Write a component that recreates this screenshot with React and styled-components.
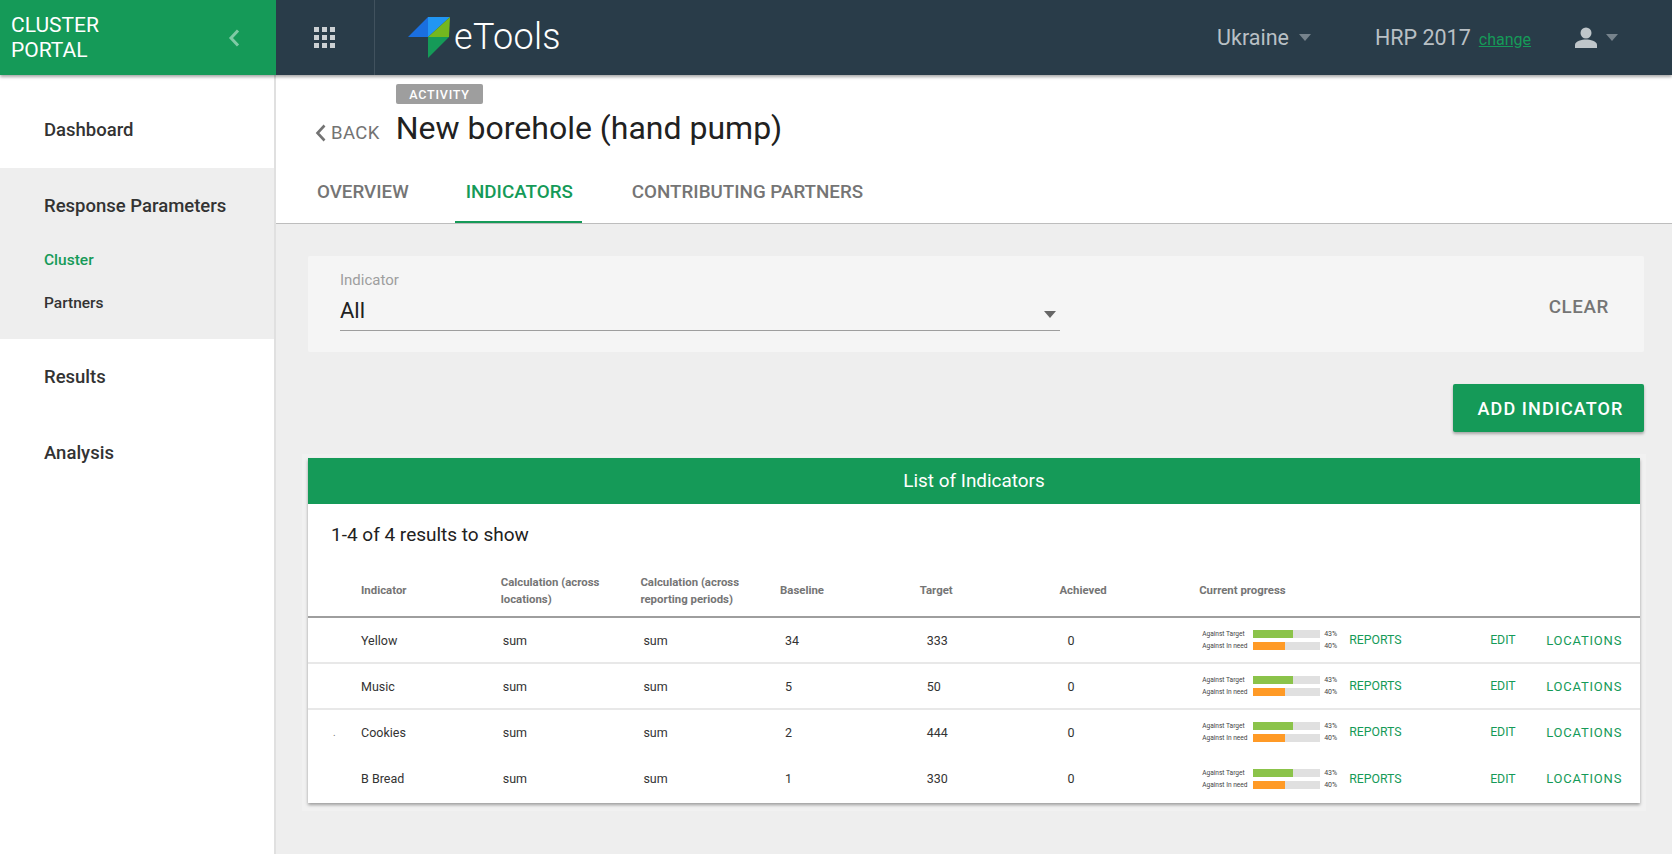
import React from "react";
import styled, { createGlobalStyle } from "styled-components";

const Global = createGlobalStyle`
  html, body { margin: 0; padding: 0; height: 100%; overflow: hidden; }
  body { font-family: Roboto, "Liberation Sans", sans-serif; background: #eeeeee; color: #212121; }
  * { box-sizing: border-box; }
`;

const Page = styled.div`width: 1672px; height: 854px; display: flex; flex-direction: column; overflow: hidden;`;
const TopBar = styled.header`height: 75px; flex: none; display: flex; background: #293c49; box-shadow: 0 2px 3px rgba(0,0,0,.35); position: relative; z-index: 2;`;
const Brand = styled.div`width: 276px; flex: none; background: #159a58; display: flex; align-items: center; justify-content: space-between; padding: 0 36px 0 11px; color: #fff; font-size: 21px; line-height: 25px; font-weight: 400;`;
const Chevron = styled.svg`display: block;`;
const AppsCell = styled.div`width: 99px; flex: none; border-right: 1px solid #41525e; display: flex; align-items: center; justify-content: center;`;
const AppsGrid = styled.div`display: grid; grid-template-columns: repeat(3, 5px); gap: 3px 3px; transform: translateX(-1px);`;
const AppsDot = styled.i`width: 5px; height: 5px; background: #ccd1d4; display: block;`;
const LogoCell = styled.div`display: flex; align-items: center; margin-left: 33px; gap: 0;`;
const LogoText = styled.span`color: #fff; font-size: 36px; font-weight: 300; margin-left: 4px; position: relative; top: -1px; letter-spacing: .3px;`;
const TopRight = styled.div`margin-left: auto; display: flex; align-items: center; padding-right: 54px; color: #b9c0c5; font-size: 21.5px;`;
const Caret = styled.i`display: inline-block; width: 0; height: 0; border-left: 6.5px solid transparent; border-right: 6.5px solid transparent; border-top: 7px solid ${p => p.$color || "#76838c"}; margin-left: ${p => p.$ml || 10}px; margin-top: ${p => p.$mt || 0}px;`;
const Country = styled.span`display: flex; align-items: center; margin-right: 64px;`;
const Plan = styled.span`margin-right: 8px;`;
const Change = styled.a`color: #159a58; font-size: 16px; text-decoration: underline; margin-right: 44px; position: relative; top: 2px;`;
const UserWrap = styled.span`display: flex; align-items: center;`;

const Body = styled.div`flex: 1; display: flex; min-height: 0;`;
const Sidebar = styled.nav`width: 276px; flex: none; background: #fff; border-right: 2px solid #e0e0e0; padding-top: 17px;`;
const NavItem = styled.div`height: 76px; display: flex; align-items: center; padding: 0 0 0 44px; font-size: 18.5px; font-weight: 500; color: #333;`;
const NavGroup = styled.div`background: #eeeeee; height: 171px;`;
const GroupTitle = styled(NavItem)`height: 70px; padding: 6px 0 0 44px;`;
const SubItem = styled.div`padding-left: 44px; font-size: 15.5px; font-weight: 500; height: 43px; display: flex; align-items: center; color: ${p => p.$active ? "#159a58" : "#333"};`;

const Main = styled.main`flex: 1; min-width: 0; display: flex; flex-direction: column;`;
const TitleArea = styled.div`background: #fff; height: 149px; border-bottom: 1px solid #bdbdbd; display: flex; flex-direction: column;`;
const TitleRow = styled.div`display: flex; align-items: flex-end; height: 73px; padding-left: 39px;`;
const Back = styled.div`display: flex; align-items: center; gap: 5px; color: #737373; font-size: 18.5px; font-weight: 400; margin-right: 16px; padding-bottom: 3px; letter-spacing: .4px;`;
const TitleBlock = styled.div`display: flex; flex-direction: column; align-items: flex-start;`;
const Badge = styled.span`background: #9e9e9e; color: #fff; font-size: 12.5px; letter-spacing: .8px; font-weight: 500; border-radius: 2px; height: 20px; padding: 0 13.5px; display: flex; align-items: center; margin-bottom: 5px;`;
const Title = styled.h1`margin: 0; font-size: 32px; font-weight: 400; line-height: 38px; color: #212121;`;
const Tabs = styled.div`display: flex; margin-top: 19px; padding-left: 41px; height: 57px;`;
const Tab = styled.div`height: 57px; margin-right: ${p => p.$gap || 0}px; padding: 15px ${p => p.$active ? "9px" : "0"} 0 ${p => p.$active ? "11px" : "0"}; font-size: 18.8px; font-weight: 500; white-space: nowrap; color: ${p => p.$active ? "#159a58" : "#757575"}; border-bottom: ${p => p.$active ? "2px solid #159a58" : "none"};`;

const Content = styled.div`flex: 1; padding: 32px 28px 0 32px; min-height: 0;`;
const Filter = styled.section`background: #f5f5f5; height: 96px; border-radius: 2px; display: flex; justify-content: space-between; padding: 14px 35px 0 32px;`;
const Field = styled.div`width: 720px;`;
const FieldLabel = styled.div`font-size: 15px; color: #9e9e9e; line-height: 20px;`;
const FieldValue = styled.div`height: 41px; border-bottom: 1px solid #9e9e9e; display: flex; align-items: center; justify-content: space-between; font-size: 22px; color: #212121; padding-right: 4px; padding-top: 1px;`;
const Clear = styled.div`font-size: 18.8px; font-weight: 500; letter-spacing: .6px; color: #757575; padding-top: 26px;`;
const ActionRow = styled.div`display: flex; justify-content: flex-end; margin-top: 32px;`;
const AddButton = styled.button`width: 191px; height: 48px; border: 0; padding: 0 0 0 4px; background: #159a58; color: #fff; font: 500 18px Roboto, sans-serif; letter-spacing: 1.1px; border-radius: 2px; box-shadow: 0 2px 3px rgba(0,0,0,.3);`;
const Card = styled.section`margin-top: 26px; width: 1332px; background: #fff; box-shadow: 0 2px 3px rgba(0,0,0,.35), 0 2px 0 6px #f1f1f1;`;
const CardHead = styled.div`height: 46px; background: #159a58; color: #fff; display: flex; align-items: center; justify-content: center; font-size: 18.9px; font-weight: 400; padding-bottom: 2px;`;
const Count = styled.div`height: 60px; padding-left: 23px; display: flex; align-items: center; font-size: 19px; color: #212121;`;
const HeadRow = styled.div`display: grid; grid-template-columns: 53px repeat(6, 139.7px) 1fr; align-items: center; height: 54px; padding-top: 1px; border-bottom: 2px solid #9e9e9e; font-size: 11.4px; font-weight: 700; color: #757575; line-height: 17px;`;
const Row = styled.div`display: grid; grid-template-columns: 53px repeat(6, 139.7px) 1fr; align-items: center; height: ${p => p.$tall ? 47 : 46}px; border-bottom: 2px solid ${p => p.$line ? "#e8e8e8" : "transparent"}; font-size: 12.5px; color: #333;`;
const Dot = styled.span`font-size: 10px; color: #777; padding-left: 25px;`;
const Cell = styled.span`padding-left: ${p => p.$pad || 0}px;`;
const ProgressCell = styled.div`display: flex; align-items: center; padding-left: 3px;`;
const Bars = styled.div`width: 147px; flex: none; display: flex; flex-direction: column; gap: 4px;`;
const BarLine = styled.div`display: flex; align-items: center; height: 8px;`;
const BarLabel = styled.span`width: 51px; font-size: 6.6px; color: #444; white-space: nowrap; flex: none;`;
const Track = styled.div`width: 67px; height: 8px; background: #e0e0e0; flex: none;`;
const Fill = styled.div`height: 100%; background: ${p => p.$color};`;
const Pct = styled.span`font-size: 7px; color: #444; margin-left: 4px;`;
const Actions = styled.div`display: grid; grid-template-columns: 141px 56px auto; align-items: center;`;
const RowLink = styled.span`color: #159a58; font-size: ${p => p.$size || 12.3}px; letter-spacing: ${p => p.$ls || 0}px;`;

const Logo = () => (
  <svg width="42" height="41" viewBox="0 0 42 41">
    <polygon points="0,20 20,0 20,20" fill="#1a6fe0" />
    <polygon points="20,0 42,0 20,20" fill="#2196f3" />
    <polygon points="42,0 41,20 20,20" fill="#74b71f" />
    <polygon points="20,20 41,20 20,41" fill="#159a58" />
  </svg>
);

const rows = [
  ["Yellow", "34", "333"],
  ["Music", "5", "50"],
  ["Cookies", "2", "444"],
  ["B Bread", "1", "330"],
];

export default function App() {
  return (
    <Page>
      <Global />
      <TopBar>
        <Brand>
          <div>CLUSTER<br />PORTAL</div>
          <Chevron width="12" height="18" viewBox="0 0 12 18"><path d="M10 1.5 3 9l7 7.5" fill="none" stroke="#7fcaa5" strokeWidth="3" /></Chevron>
        </Brand>
        <AppsCell><AppsGrid>{Array.from({ length: 9 }).map((_, i) => <AppsDot key={i} />)}</AppsGrid></AppsCell>
        <LogoCell><Logo /><LogoText>eTools</LogoText></LogoCell>
        <TopRight>
          <Country>Ukraine<Caret /></Country>
          <Plan>HRP 2017</Plan>
          <Change>change</Change>
          <UserWrap>
            <svg width="22" height="22" viewBox="0 0 22 22" fill="#bfc6ca"><circle cx="11" cy="6" r="5.5" /><path d="M0 21v-3c0-4 7-5.5 11-5.5S22 14 22 18v3z" /></svg>
            <Caret $ml={9} />
          </UserWrap>
        </TopRight>
      </TopBar>
      <Body>
        <Sidebar>
          <NavItem>Dashboard</NavItem>
          <NavGroup>
            <GroupTitle>Response Parameters</GroupTitle>
            <SubItem $active>Cluster</SubItem>
            <SubItem>Partners</SubItem>
          </NavGroup>
          <NavItem>Results</NavItem>
          <NavItem>Analysis</NavItem>
        </Sidebar>
        <Main>
          <TitleArea>
            <TitleRow>
              <Back>
                <svg width="11" height="18" viewBox="0 0 11 18"><path d="M9.5 1.5 2.5 9l7 7.5" fill="none" stroke="#737373" strokeWidth="2.6" /></svg>
                BACK
              </Back>
              <TitleBlock>
                <Badge>ACTIVITY</Badge>
                <Title>New borehole (hand pump)</Title>
              </TitleBlock>
            </TitleRow>
            <Tabs>
              <Tab $gap={46}>OVERVIEW</Tab>
              <Tab $gap={50} $active>INDICATORS</Tab>
              <Tab>CONTRIBUTING PARTNERS</Tab>
            </Tabs>
          </TitleArea>
          <Content>
            <Filter>
              <Field>
                <FieldLabel>Indicator</FieldLabel>
                <FieldValue>All<Caret $color="#666" $mt={8} /></FieldValue>
              </Field>
              <Clear>CLEAR</Clear>
            </Filter>
            <ActionRow><AddButton>ADD INDICATOR</AddButton></ActionRow>
            <Card>
              <CardHead>List of Indicators</CardHead>
              <Count>1-4 of 4 results to show</Count>
              <HeadRow>
                <span />
                <span>Indicator</span>
                <span>Calculation (across<br />locations)</span>
                <span>Calculation (across<br />reporting periods)</span>
                <span>Baseline</span>
                <span>Target</span>
                <span>Achieved</span>
                <span>Current progress</span>
              </HeadRow>
              {rows.map(([name, base, target], i) => (
                <Row key={name} $line={i < 2} $tall={i === 3}>
                  <Dot>{i === 2 ? "." : ""}</Dot>
                  <Cell>{name}</Cell>
                  <Cell $pad={2}>sum</Cell>
                  <Cell $pad={3}>sum</Cell>
                  <Cell $pad={5}>{base}</Cell>
                  <Cell $pad={7}>{target}</Cell>
                  <Cell $pad={8}>0</Cell>
                  <ProgressCell>
                    <Bars>
                      <BarLine><BarLabel>Against Target</BarLabel><Track><Fill $color="#8bc34a" style={{ width: "60%" }} /></Track><Pct>43%</Pct></BarLine>
                      <BarLine><BarLabel>Against In need</BarLabel><Track><Fill $color="#ff9a26" style={{ width: "47%" }} /></Track><Pct>40%</Pct></BarLine>
                    </Bars>
                    <Actions>
                      <RowLink>REPORTS</RowLink>
                      <RowLink>EDIT</RowLink>
                      <RowLink $size={13} $ls={0.8}>LOCATIONS</RowLink>
                    </Actions>
                  </ProgressCell>
                </Row>
              ))}
            </Card>
          </Content>
        </Main>
      </Body>
    </Page>
  );
}
